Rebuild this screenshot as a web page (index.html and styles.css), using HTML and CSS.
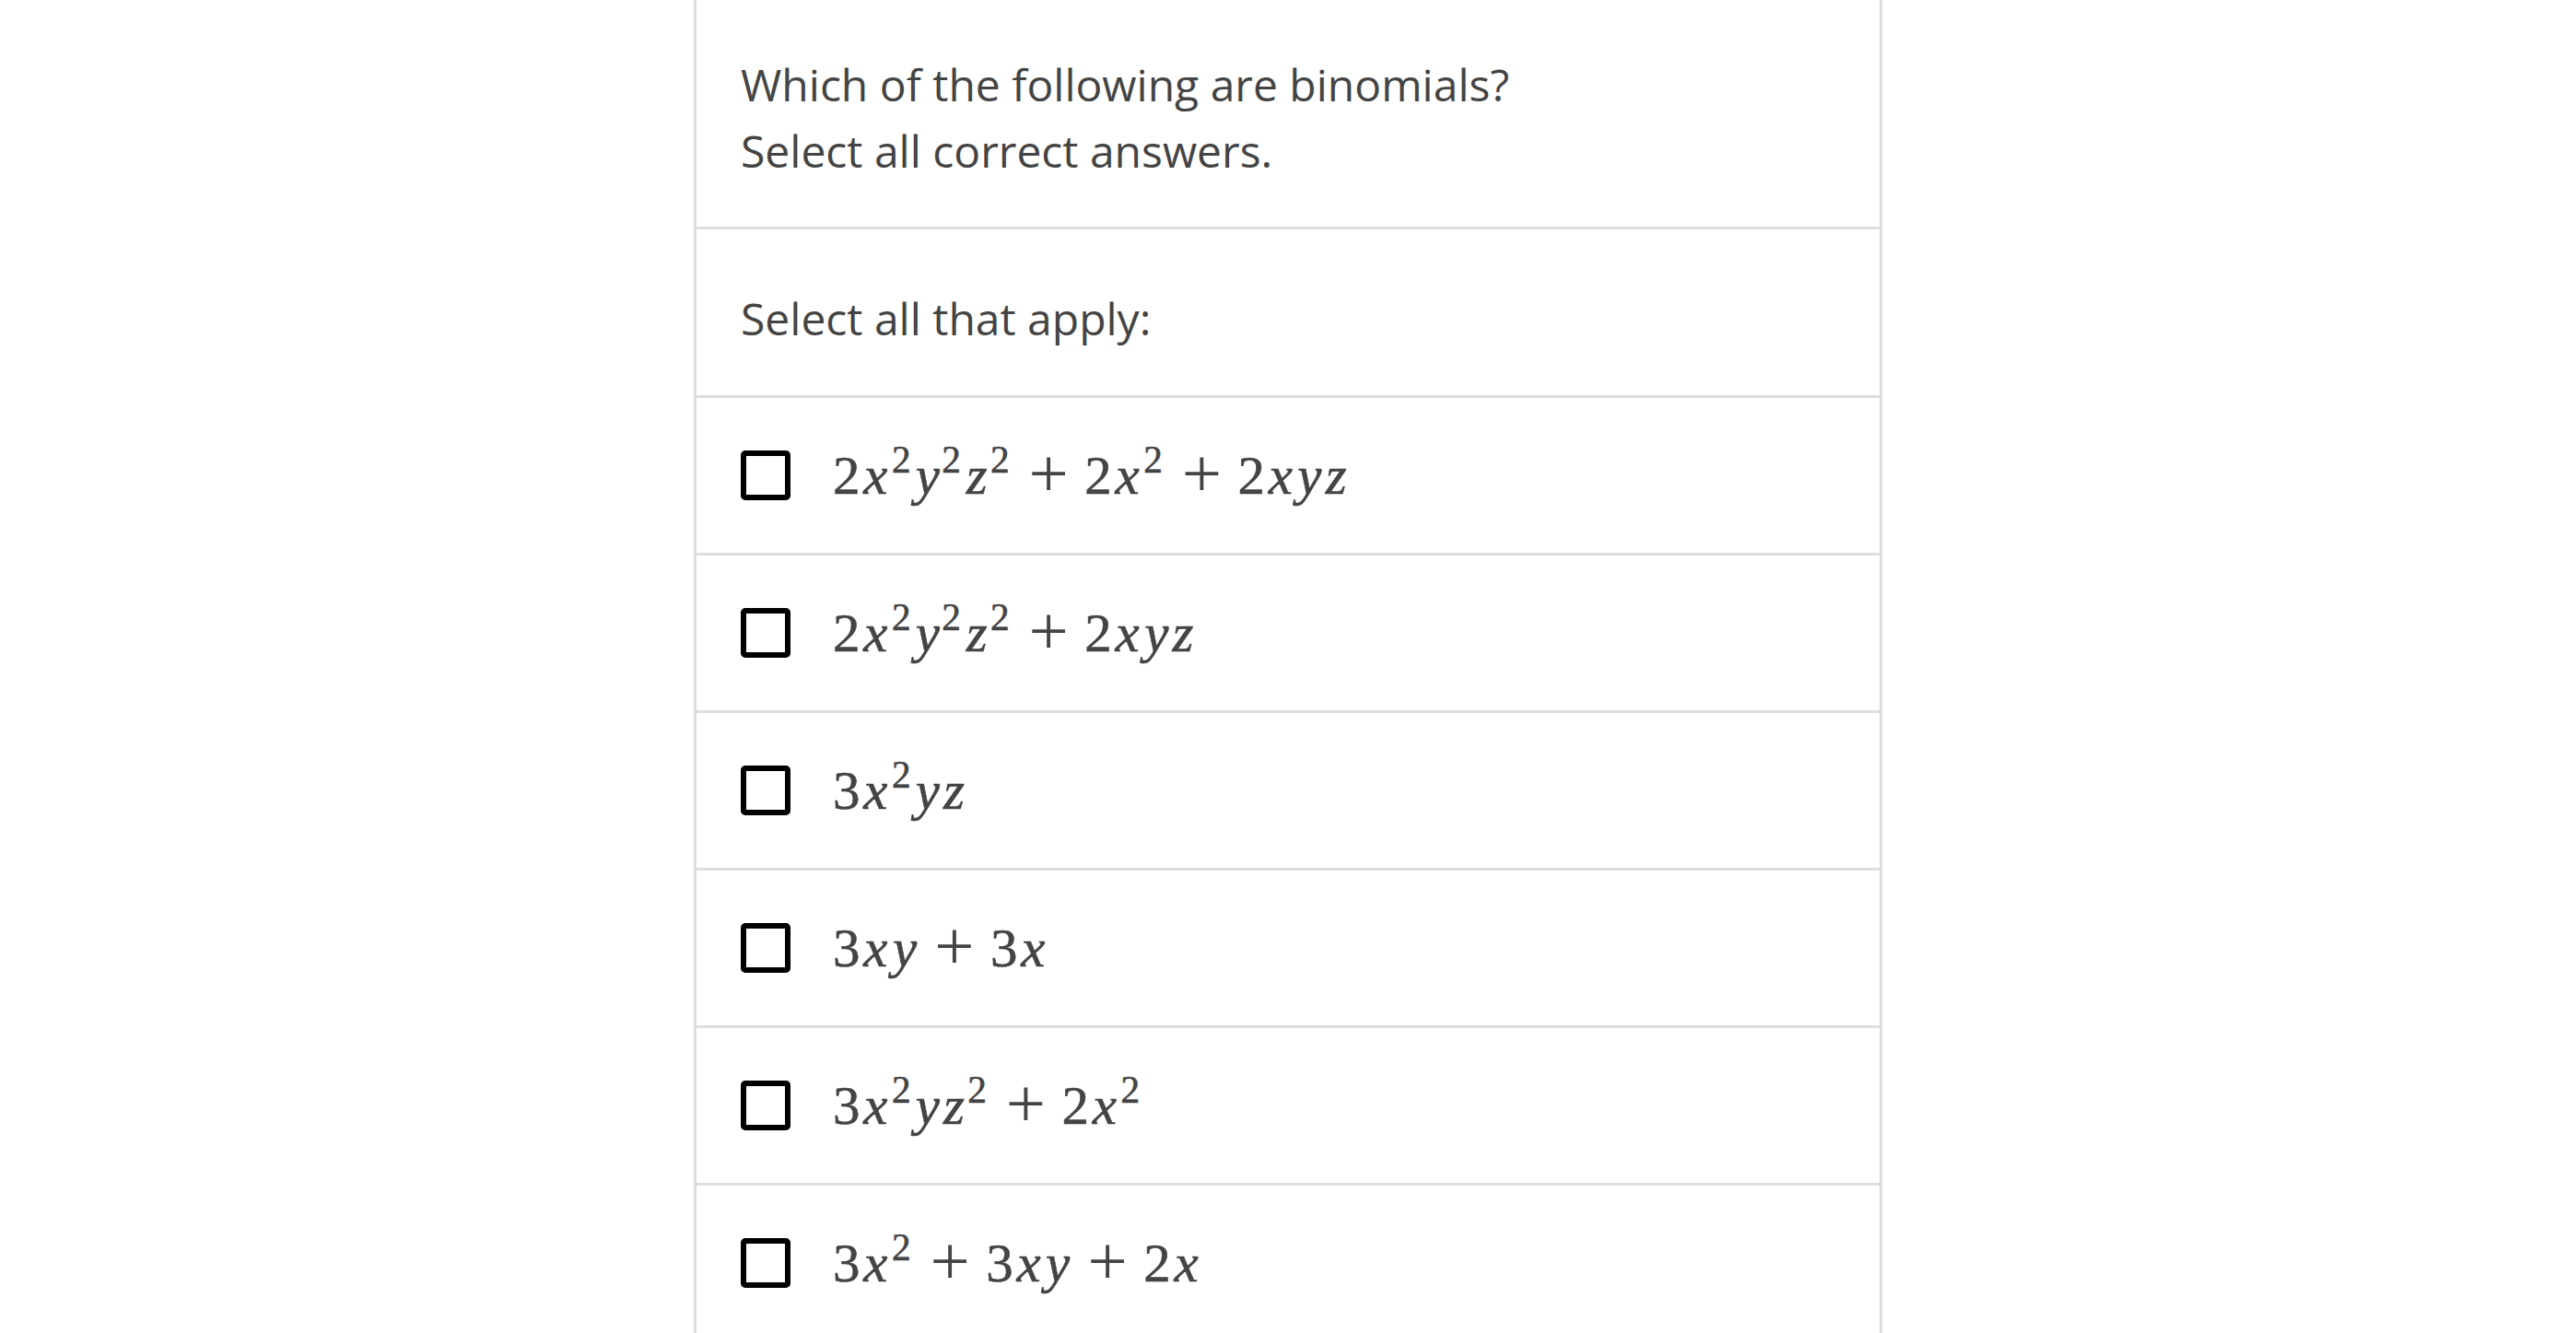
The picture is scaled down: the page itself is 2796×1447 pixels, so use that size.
FILE: index.html
```html
<!DOCTYPE html>
<html lang="en">
<head>
<meta charset="utf-8">
<title>Binomials</title>
<link rel="stylesheet" href="styles.css">
</head>
<body>
<main class="page">
  <section class="card">
    <div class="question">
      <p>Which of the following are binomials?</p>
      <p>Select all correct answers.</p>
    </div>
    <div class="instructions">Select all that apply:</div>
    <ul class="choices">
      <li class="choice"><span class="box"></span><span class="math"><span class="mn">2</span><span class="mi x">x</span><sup>2</sup><span class="mi y">y</span><sup>2</sup><span class="mi z">z</span><sup>2</sup><span class="mo">+</span><span class="mn">2</span><span class="mi x">x</span><sup>2</sup><span class="mo">+</span><span class="mn">2</span><span class="mi x">x</span><span class="mi y">y</span><span class="mi z">z</span></span></li>
      <li class="choice"><span class="box"></span><span class="math"><span class="mn">2</span><span class="mi x">x</span><sup>2</sup><span class="mi y">y</span><sup>2</sup><span class="mi z">z</span><sup>2</sup><span class="mo">+</span><span class="mn">2</span><span class="mi x">x</span><span class="mi y">y</span><span class="mi z">z</span></span></li>
      <li class="choice"><span class="box"></span><span class="math"><span class="mn">3</span><span class="mi x">x</span><sup>2</sup><span class="mi y">y</span><span class="mi z">z</span></span></li>
      <li class="choice"><span class="box"></span><span class="math"><span class="mn">3</span><span class="mi x">x</span><span class="mi y">y</span><span class="mo">+</span><span class="mn">3</span><span class="mi x">x</span></span></li>
      <li class="choice"><span class="box"></span><span class="math"><span class="mn">3</span><span class="mi x">x</span><sup>2</sup><span class="mi y">y</span><span class="mi z">z</span><sup>2</sup><span class="mo">+</span><span class="mn">2</span><span class="mi x">x</span><sup>2</sup></span></li>
      <li class="choice"><span class="box"></span><span class="math"><span class="mn">3</span><span class="mi x">x</span><sup>2</sup><span class="mo">+</span><span class="mn">3</span><span class="mi x">x</span><span class="mi y">y</span><span class="mo">+</span><span class="mn">2</span><span class="mi x">x</span></span></li>
    </ul>
  </section>
</main>
</body>
</html>
```

FILE: styles.css
```css
* {
  box-sizing: border-box;
}

html,
body {
  margin: 0;
  padding: 0;
  background: #ffffff;
}

body {
  font-family: "Open Sans", "Noto Sans", sans-serif;
  color: #444444;
  height: 1447px;
  overflow: hidden;
}

.page {
  display: flex;
  justify-content: center;
}

.card {
  width: 1290px;
  border-left: 3px solid #dddddd;
  border-right: 3px solid #dddddd;
}

.question {
  padding: 56px 48px 46px;
  border-bottom: 3px solid #dddddd;
}

.question p {
  margin: 0;
  font-size: 48px;
  line-height: 72px;
}

.instructions {
  padding: 61px 48px 47px;
  font-size: 48px;
  line-height: 72px;
  border-bottom: 3px solid #dddddd;
}

.choices {
  list-style: none;
  margin: 0;
  padding: 0;
}

.choice {
  height: 171px;
  display: flex;
  align-items: center;
  padding-left: 48px;
  border-bottom: 3px solid #dddddd;
}

.box {
  flex: none;
  width: 54px;
  height: 54px;
  border: 6px solid #000000;
  border-radius: 5px;
  background: #ffffff;
}

.math {
  margin-left: 46px;
  font-family: "Liberation Serif", "Times New Roman", serif;
  font-size: 59px;
  line-height: 60px;
  color: #444444;
  white-space: nowrap;
  -webkit-text-stroke: 0.6px #444444;
}

.mn {
  display: inline-block;
  width: 0.5em;
  text-align: center;
}

.mi {
  display: inline-block;
  font-style: italic;
  text-align: center;
}

.mi.x {
  width: 0.572em;
}

.mi.y {
  width: 0.5em;
}

.mi.z {
  width: 0.475em;
}

.mo {
  display: inline-block;
  font-size: 1.3em;
  line-height: 0;
  width: 0.6em;
  margin: 0 0.21em;
  text-align: center;
  vertical-align: -0.04em;
  -webkit-text-stroke: 0;
}

.math sup {
  font-size: 0.7em;
  line-height: 0;
  vertical-align: 0.55em;
  margin-left: 0.02em;
  margin-right: 0.08em;
}
```
